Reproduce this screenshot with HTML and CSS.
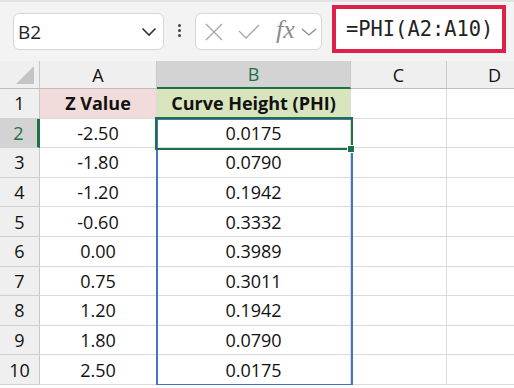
FILE: index.html
```html
<!DOCTYPE html>
<html lang="en">
<head>
  <meta charset="UTF-8">
  <meta name="viewport" content="width=device-width, initial-scale=1.0">
  <title>PHI</title>
  <link rel="stylesheet" href="styles.css">
</head>
<body>
  <div class="toolbar">
    <div class="name-box">
      <span>B2</span>
      <svg class="chev" width="16" height="10" viewBox="0 0 16 10"><path d="M1.5 1.5 L8 8 L14.5 1.5" fill="none" stroke="#333" stroke-width="1.6"/></svg>
    </div>
    <div class="dots"><i></i><i></i><i></i></div>
    <div class="fx-box">
      <svg width="18" height="18" viewBox="0 0 18 18"><path d="M1 1 L17 17 M17 1 L1 17" stroke="#a8a8a8" stroke-width="1.4" fill="none"/></svg>
      <svg width="22" height="15" viewBox="0 0 22 15"><path d="M1 7 L8 14 L21 1" stroke="#a8a8a8" stroke-width="1.4" fill="none"/></svg>
      <span class="fx">fx</span>
      <svg width="16" height="8" viewBox="0 0 16 8"><path d="M1 1 L8 7 L15 1" fill="none" stroke="#8a8a8a" stroke-width="1.3"/></svg>
    </div>
    <div class="formula">=PHI(A2:A10)</div>
  </div>

  <div class="sheet">
    <div class="grid">
      <div class="corner"><div class="tri"></div></div>
      <div class="col-head">A</div>
      <div class="col-head sel">B</div>
      <div class="col-head">C</div>
      <div class="col-head">D</div>

      <div class="row-head">1</div>
      <div class="cell head-a">Z Value</div>
      <div class="cell head-b">Curve Height (PHI)</div>
      <div class="cell"></div>
      <div class="cell"></div>

      <div class="row-head sel">2</div><div class="cell">-2.50</div><div class="cell">0.0175</div><div class="cell"></div><div class="cell"></div>
      <div class="row-head">3</div><div class="cell">-1.80</div><div class="cell">0.0790</div><div class="cell"></div><div class="cell"></div>
      <div class="row-head">4</div><div class="cell">-1.20</div><div class="cell">0.1942</div><div class="cell"></div><div class="cell"></div>
      <div class="row-head">5</div><div class="cell">-0.60</div><div class="cell">0.3332</div><div class="cell"></div><div class="cell"></div>
      <div class="row-head">6</div><div class="cell">0.00</div><div class="cell">0.3989</div><div class="cell"></div><div class="cell"></div>
      <div class="row-head">7</div><div class="cell">0.75</div><div class="cell">0.3011</div><div class="cell"></div><div class="cell"></div>
      <div class="row-head">8</div><div class="cell">1.20</div><div class="cell">0.1942</div><div class="cell"></div><div class="cell"></div>
      <div class="row-head">9</div><div class="cell">1.80</div><div class="cell">0.0790</div><div class="cell"></div><div class="cell"></div>
      <div class="row-head">10</div><div class="cell">2.50</div><div class="cell">0.0175</div><div class="cell"></div><div class="cell"></div>
    </div>
    <div class="range"></div>
    <div class="active"></div>
    <div class="handle"></div>
  </div>
</body>
</html>
```

FILE: styles.css
```css
body {
  margin: 0;
  font-family: "Open Sans", sans-serif;
  background: #fff;
  overflow: hidden;
}

.toolbar {
  height: 61px;
  box-sizing: border-box;
  background: #f3f3f3;
  border-top: 2px solid #e2e2e2;
  display: flex;
  align-items: flex-start;
  padding-left: 13px;
}

.name-box {
  margin-top: 11px;
  width: 151px;
  height: 37px;
  box-sizing: border-box;
  background: #fff;
  border: 1px solid #d6d6d6;
  border-radius: 6px;
  display: flex;
  align-items: center;
  justify-content: space-between;
  padding: 0 6px 0 4px;
  font-size: 19px;
  color: #222;
}

.dots {
  margin: 22px 14px 0 14px;
  display: flex;
  flex-direction: column;
  gap: 2px;
}

.dots i {
  width: 3px;
  height: 3px;
  background: #444;
  border-radius: 50%;
}

.fx-box {
  margin-top: 11px;
  width: 127px;
  height: 37px;
  box-sizing: border-box;
  background: #fff;
  border: 1px solid #d6d6d6;
  border-radius: 6px;
  display: flex;
  align-items: center;
  padding: 0 4px 0 9px;
  gap: 15px;
}

.fx-box .fx {
  font-family: "Liberation Serif", serif;
  font-style: italic;
  font-size: 26px;
  color: #8c8c8c;
  margin-left: 1px;
  margin-right: -9px;
  line-height: 1;
  padding-bottom: 3px;
}

.formula {
  margin: 3px 0 0 10px;
  width: 174px;
  height: 48px;
  box-sizing: border-box;
  background: #fff;
  border: 4px solid #e0204c;
  font-family: "DejaVu Sans Mono", monospace;
  font-size: 20.4px;
  color: #222;
  display: flex;
  align-items: center;
  padding-left: 10px;
  white-space: nowrap;
}

.sheet {
  position: relative;
  overflow: hidden;
}

.grid {
  display: grid;
  grid-template-columns: 40px 117px 194px 96px 96px;
  grid-template-rows: 28px repeat(10, 29.6px);
}

.corner,
.col-head,
.row-head {
  background: #efefef;
  box-sizing: border-box;
  border-right: 1px solid #c8c8c8;
  border-bottom: 1px solid #bdbdbd;
  display: flex;
  align-items: center;
  justify-content: center;
  font-size: 18px;
  color: #111;
}

.corner {
  align-items: flex-end;
  justify-content: flex-end;
  padding: 0 5px 4px 0;
}

.tri {
  width: 0;
  height: 0;
  border-left: 18px solid transparent;
  border-bottom: 18px solid #c4c4c4;
}

.col-head.sel {
  background: #d3d3d3;
  color: #1e7145;
  border-bottom: 2px solid #1e7145;
}

.row-head {
  border-bottom-color: #d0d0d0;
}

.row-head.sel {
  background: #d3d3d3;
  color: #1e7145;
  border-right: 3px solid #1e7145;
}

.cell {
  box-sizing: border-box;
  border-right: 1px solid #dadada;
  border-bottom: 1px solid #dadada;
  display: flex;
  align-items: center;
  justify-content: center;
  font-size: 18px;
  color: #111;
}

.head-a {
  background: #f2dcdb;
  font-weight: 700;
}

.head-b {
  background: #d8e4bc;
  font-weight: 700;
}

.range {
  position: absolute;
  left: 156px;
  top: 57px;
  width: 197px;
  height: 268px;
  box-sizing: border-box;
  border: 2px solid #4472c4;
}

.active {
  position: absolute;
  left: 155px;
  top: 56px;
  width: 198px;
  height: 33px;
  box-sizing: border-box;
  border: 2px solid #1e7145;
}

.handle {
  position: absolute;
  left: 347px;
  top: 84px;
  width: 8px;
  height: 8px;
  box-sizing: border-box;
  background: #1e7145;
  border: 1px solid #fff;
}
```
